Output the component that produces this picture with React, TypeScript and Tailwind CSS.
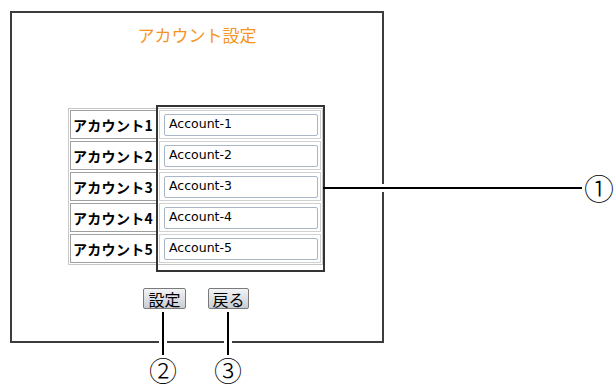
import React from "react";

const rows = [1, 2, 3, 4, 5];

export default function App() {
  return (
    <div
      className="relative w-[615px] h-[385px] bg-white overflow-hidden"
      style={{ fontFamily: '"Noto Sans CJK JP", "Noto Sans", sans-serif' }}
    >
      <div className="pl-[10px] pt-[11px]">
        <div className="w-[374px] h-[332px] border-2 border-[#3c3c3c] flex flex-col">
          <div className="pt-[12px] text-center text-[17px] leading-[20px] text-[#f7941d]">
            アカウント設定
          </div>
          <div className="ml-[56px] mt-[63px] w-[255px] border border-[#c8c8c8] p-px flex flex-col gap-[2px]">
            {rows.map((n) => (
              <div key={n} className="flex gap-[2px] h-[29px]">
                <div className="w-[87px] h-full border border-[#a0a0a0] flex items-center pl-[2px] text-[14px] font-semibold text-black leading-none tracking-[0.3px]">
                  アカウント{n}
                </div>
                <div className="flex-1 h-full border border-[#d0d0d0] flex items-center pl-[4px]">
                  <div
                    className="w-[154px] h-[22px] border border-[#a9b6c6] rounded-[2px] flex items-center pl-[4px] text-[12.5px] text-black"
                    style={{ fontFamily: '"DejaVu Sans", sans-serif' }}
                  >
                    Account-{n}
                  </div>
                </div>
              </div>
            ))}
          </div>
          <div className="ml-[131px] mt-[23px] flex gap-[22px]">
            <div className="w-[43px] h-[21px] border border-[#7a7a7a] rounded-[2px] bg-gradient-to-b from-[#f2f4f6] to-[#c9ced5] flex items-center justify-center text-[16px] leading-none text-black">
              設定
            </div>
            <div className="w-[41px] h-[21px] border border-[#7a7a7a] rounded-[2px] bg-gradient-to-b from-[#f2f4f6] to-[#c9ced5] flex items-center justify-center text-[16px] leading-none text-black">
              戻る
            </div>
          </div>
        </div>
      </div>

      {/* highlight rectangle */}
      <div className="absolute left-[156px] top-[105px] w-[169px] h-[167px] border-2 border-[#333]" />

      {/* callout 1 */}
      <div className="absolute left-[327px] top-[184px] w-[255px] h-[8px] border-y-[3px] border-white bg-black" />
      <div className="absolute left-[323px] top-[187px] w-[6px] h-[2px] bg-black" />
      <div className="absolute left-[584px] top-[172px] h-[30px] text-[30px] leading-[30px] font-light text-black">①</div>

      {/* callout 2 */}
      <div className="absolute left-[159px] top-[312px] w-[8px] h-[43px] border-x-[3px] border-white bg-black" />
      <div className="absolute left-[149px] top-[356px] h-[29px] text-[28px] leading-[29px] font-light text-black">②</div>

      {/* callout 3 */}
      <div className="absolute left-[214px] top-[356px] h-[29px] text-[28px] leading-[29px] font-light text-black">③</div>
      <div className="absolute left-[224px] top-[312px] w-[8px] h-[43px] border-x-[3px] border-white bg-black" />
    </div>
  );
}
